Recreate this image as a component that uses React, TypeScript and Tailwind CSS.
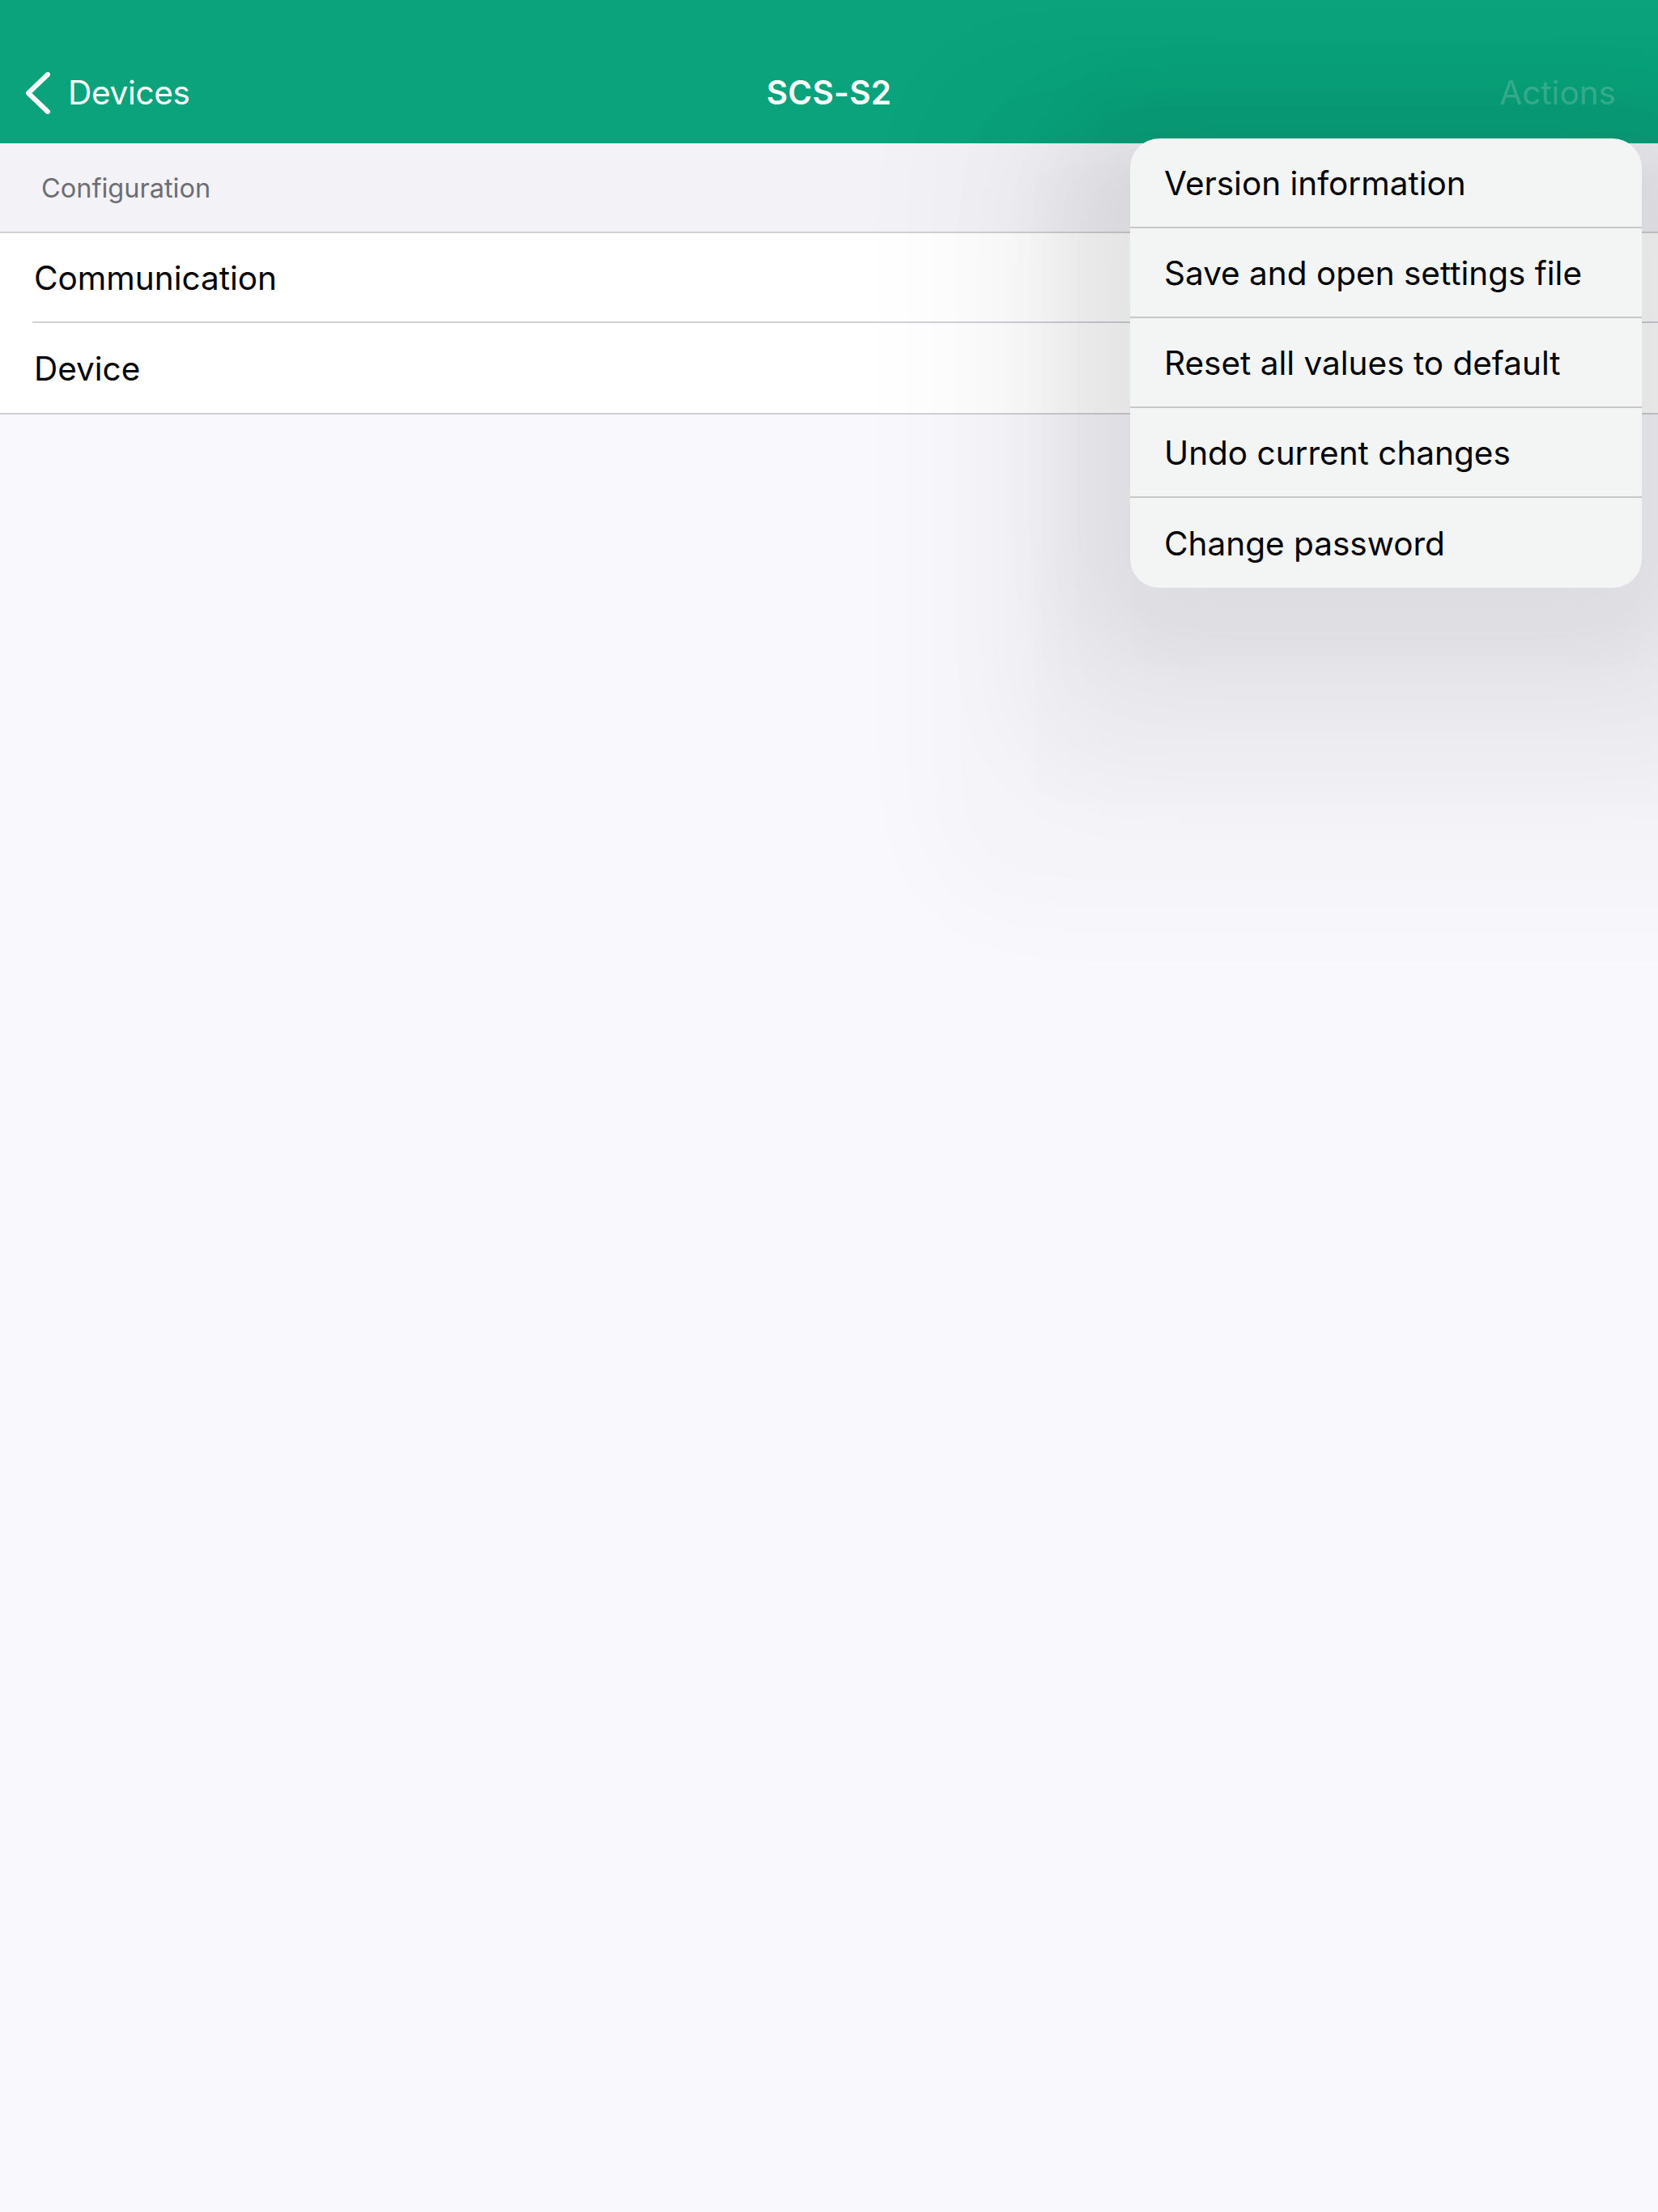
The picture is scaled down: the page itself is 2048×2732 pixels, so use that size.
import React from 'react';

const menuItems = [
  'Version information',
  'Save and open settings file',
  'Reset all values to default',
  'Undo current changes',
  'Change password',
];

const rows = ['Communication', 'Device'];

function BackChevron() {
  return (
    <svg width="34" height="52" viewBox="0 0 34 52" fill="none" className="shrink-0">
      <path d="M29 3 L5 26 L29 49" stroke="white" strokeWidth="6" strokeLinecap="round" strokeLinejoin="round" />
    </svg>
  );
}

export default function App() {
  return (
    <div
      className="relative min-h-screen w-full overflow-hidden bg-[#f9f8fd]"
      style={{ fontFamily: 'Inter, "Noto Sans", sans-serif' }}
    >
      {/* nav bar */}
      <header className="h-[177px] bg-[#0aa37b] pt-[89px]">
        <div className="grid grid-cols-[1fr_auto_1fr] items-center px-[30px] text-[40.5px] leading-[48px]">
          <div className="flex items-center gap-[20px] text-white">
            <BackChevron />
            <span className="tracking-[-0.3px]">Devices</span>
          </div>
          <div className="font-semibold text-white tracking-[0.3px]">SCS-S2</div>
          <div className="text-right pr-[22px] text-white/20">Actions</div>
        </div>
      </header>

      {/* section */}
      <div className="flex h-[111px] items-center border-b-2 border-[#d1d1d6] bg-[#f2f2f7] px-[51px] pt-[4px]">
        <span className="text-[32.5px] text-[#6d6d72]">Configuration</span>
      </div>
      <div className="border-b-2 border-[#d1d1d6] bg-white">
        {rows.map((r, i) => (
          <div key={r} className="pl-[40px]">
            <div
              className={`flex h-[111px] items-center pt-[3px] text-[40.5px] text-black ${
                i < rows.length - 1 ? 'border-b-2 border-[#d1d1d6]' : ''
              }`}
            >
              <span className="pl-[2px]">{r}</span>
            </div>
          </div>
        ))}
      </div>

      {/* actions popover */}
      <div className="absolute left-[1396px] top-[171px] w-[632px] overflow-hidden rounded-[36px] bg-[#f3f4f4] shadow-[0_30px_120px_60px_rgba(0,0,0,0.06),0_100px_120px_140px_rgba(0,0,0,0.04),0_150px_120px_260px_rgba(0,0,0,0.02)]">
        {menuItems.map((m, i) => (
          <div
            key={m}
            className={`flex h-[111px] items-center px-[42px] pt-[3px] text-[40.5px] text-black ${
              i < menuItems.length - 1 ? 'border-b-2 border-[#c8c8cb]' : ''
            }`}
          >
            {m}
          </div>
        ))}
      </div>
    </div>
  );
}
